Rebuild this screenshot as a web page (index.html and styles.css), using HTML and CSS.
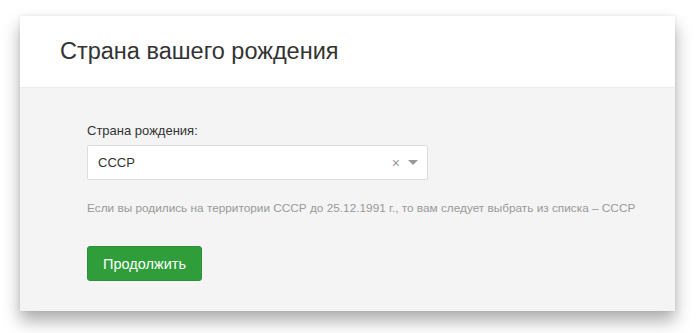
FILE: index.html
```html
<!DOCTYPE html>
<html lang="ru">
<head>
<meta charset="utf-8">
<link rel="stylesheet" href="styles.css">
</head>
<body>
<div class="card">
  <div class="card-header">
    <h1 class="title">Страна вашего рождения</h1>
  </div>
  <div class="card-body">
    <label class="label">Страна рождения:</label>
    <div class="select">
      <span class="select-value">СССР</span>
      <span class="select-clear">×</span>
      <span class="select-arrow"></span>
    </div>
    <p class="hint">Если вы родились на территории СССР до 25.12.1991 г., то вам следует выбрать из списка – СССР</p>
    <button class="btn">Продолжить</button>
  </div>
</div>
</body>
</html>
```
FILE: styles.css
```css
html, body {
  margin: 0;
  padding: 0;
  background: #ffffff;
  font-family: "Liberation Sans", Arial, sans-serif;
}
body {
  padding: 16px 25px 22px 20px;
}
.card {
  width: 655px;
  box-shadow: 0 10px 16px rgba(0, 0, 0, 0.32), 0 0 4px rgba(0, 0, 0, 0.08);
  background: #f4f4f4;
}
.card-header {
  background: #ffffff;
  height: 71px;
  border-bottom: 1px solid #ebebeb;
  display: flex;
  align-items: center;
  padding-left: 40px;
}
.title {
  margin: 0;
  font-size: 23.5px;
  font-weight: normal;
  color: #333333;
}
.card-body {
  padding: 35px 67px 30px 67px;
  display: flex;
  flex-direction: column;
  align-items: flex-start;
}
.label {
  font-size: 13px;
  color: #333333;
  line-height: 15px;
  margin-bottom: 7px;
}
.select {
  height: 33px;
  background: #ffffff;
  border: 1px solid #dddddd;
  border-radius: 2px;
  display: flex;
  align-items: center;
  padding: 0 9px 0 10px;
  box-sizing: content-box;
  width: 320px;
}
.select-value {
  flex: 1;
  font-size: 13px;
  color: #333333;
}
.select-clear {
  color: #999999;
  font-size: 14px;
  margin-right: 8px;
}
.select-arrow {
  width: 0;
  height: 0;
  border-left: 5px solid transparent;
  border-right: 5px solid transparent;
  border-top: 5px solid #999999;
}
.hint {
  margin: 22px 0 0 0;
  font-size: 11.8px;
  color: #999999;
  line-height: 13px;
  white-space: nowrap;
}
.btn {
  margin-top: 31px;
  width: 115px;
  height: 35px;
  background: #2f9e3a;
  border: 1px solid #2a9135;
  border-radius: 3px;
  color: #ffffff;
  font-family: "Liberation Sans", Arial, sans-serif;
  font-size: 14.5px;
  padding: 0;
}
```
